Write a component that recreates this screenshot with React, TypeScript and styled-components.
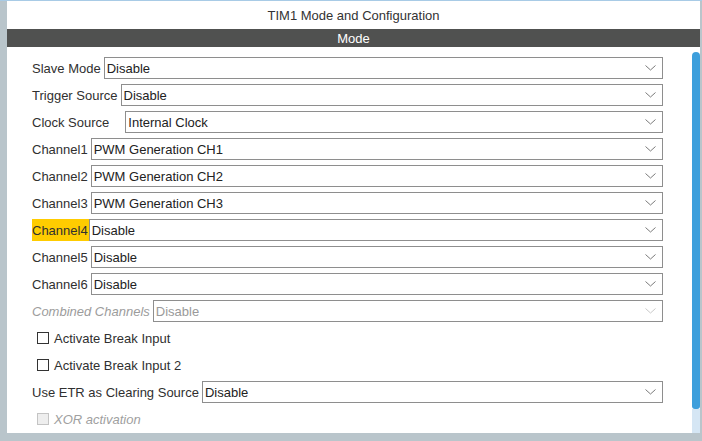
import * as React from 'react';
import styled, { createGlobalStyle } from 'styled-components';

const GlobalStyle = createGlobalStyle`
    html, body {
        margin: 0;
        padding: 0;
        background: #b9c5cb;
    }
    body {
        font-family: 'Liberation Sans', Arial, sans-serif;
        font-size: 13px;
        color: #2b2b2b;
    }
`;

const Frame = styled.div`
    width: 702px;
    height: 441px;
    box-sizing: border-box;
    padding: 0 2px 8px 7px;
    display: flex;
    flex-direction: column;
    background: #b9c5cb;
    border-top: 1px solid #a8cbe6;
`;

const Panel = styled.div`
    flex: 1;
    display: flex;
    flex-direction: column;
    background: #ffffff;
    min-height: 0;
`;

const Title = styled.div`
    height: 28px;
    display: flex;
    align-items: center;
    justify-content: center;
    color: #333333;
`;

const SectionBar = styled.div`
    height: 18px;
    display: flex;
    align-items: center;
    justify-content: center;
    background: #505150;
    color: #ffffff;
`;

const Body = styled.div`
    flex: 1;
    display: flex;
    min-height: 0;
`;

const Form = styled.div`
    flex: 1;
    display: flex;
    flex-direction: column;
    gap: 5px;
    padding: 10px 29px 0 25px;
`;

const Row = styled.div`
    height: 22px;
    display: flex;
    align-items: center;
`;

interface LabelProps {
    $highlight?: boolean;
    $disabled?: boolean;
    $gap?: number;
}

const Label = styled.span<LabelProps>`
    white-space: nowrap;
    height: 22px;
    box-sizing: border-box;
    padding-top: 1px;
    line-height: 21px;
    margin-right: ${(props) => (props.$gap !== undefined ? props.$gap : 3)}px;
    background: ${(props) => (props.$highlight ? '#ffcc00' : 'transparent')};
    color: ${(props) => (props.$disabled ? '#9c9c9c' : '#303030')};
    font-style: ${(props) => (props.$disabled ? 'italic' : 'normal')};
    padding-right: ${(props) => (props.$highlight ? 1 : 0)}px;
`;

const Select = styled.div<{ $disabled?: boolean }>`
    flex: 1;
    height: 22px;
    box-sizing: border-box;
    border: 1px solid #8e8e8e;
    display: flex;
    align-items: center;
    padding: 0 6px 0 2px;
    color: ${(props) => (props.$disabled ? '#9a9a9a' : '#222222')};
    background: #ffffff;
`;

const SelectText = styled.span`
    flex: 1;
    white-space: nowrap;
`;

const CheckRow = styled.label<{ $disabled?: boolean }>`
    height: 22px;
    display: flex;
    align-items: center;
    padding-left: 5px;
    color: ${(props) => (props.$disabled ? '#a0a0a0' : '#303030')};
    font-style: ${(props) => (props.$disabled ? 'italic' : 'normal')};
`;

const Box = styled.span<{ $disabled?: boolean }>`
    width: 12px;
    height: 12px;
    box-sizing: border-box;
    border: 1px solid ${(props) => (props.$disabled ? '#c4c4c4' : '#333333')};
    background: ${(props) => (props.$disabled ? '#eeeeee' : '#ffffff')};
    margin-right: 5px;
`;

const ScrollTrack = styled.div`
    width: 8px;
    display: flex;
    flex-direction: column;
    padding-top: 5px;
`;

const Thumb = styled.div`
    height: 357px;
    background: #3d9fdc;
    border-radius: 4px 4px 3px 3px;
`;

const TrackRest = styled.div`
    flex: 1;
    background: #d5e6f4;
`;

const Chevron = ({ disabled }: { disabled?: boolean }) => (
    <svg width="11" height="6" viewBox="0 0 11 6">
        <path d="M0.5 0.5 L5.5 5 L10.5 0.5" fill="none" stroke={disabled ? '#c9c9c9' : '#7a7a7a'} strokeWidth="1" />
    </svg>
);

interface FieldProps {
    label: string;
    value: string;
    gap?: number;
    highlight?: boolean;
    disabled?: boolean;
}

const Field = (props: FieldProps) => (
    <Row>
        <Label $gap={props.gap} $highlight={props.highlight} $disabled={props.disabled}>
            {props.label}
        </Label>
        <Select $disabled={props.disabled}>
            <SelectText>{props.value}</SelectText>
            <Chevron disabled={props.disabled} />
        </Select>
    </Row>
);

const Check = ({ label, disabled }: { label: string; disabled?: boolean }) => (
    <CheckRow $disabled={disabled}>
        <Box $disabled={disabled} />
        {label}
    </CheckRow>
);

export default function App() {
    return (
        <>
            <GlobalStyle />
            <Frame>
                <Panel>
                    <Title>TIM1 Mode and Configuration</Title>
                    <SectionBar>Mode</SectionBar>
                    <Body>
                        <Form>
                            <Field label="Slave Mode" value="Disable" />
                            <Field label="Trigger Source" value="Disable" />
                            <Field label="Clock Source" value="Internal Clock" gap={16} />
                            <Field label="Channel1" value="PWM Generation CH1" />
                            <Field label="Channel2" value="PWM Generation CH2" />
                            <Field label="Channel3" value="PWM Generation CH3" />
                            <Field label="Channel4" value="Disable" highlight gap={0} />
                            <Field label="Channel5" value="Disable" />
                            <Field label="Channel6" value="Disable" />
                            <Field label="Combined Channels" value="Disable" disabled />
                            <Check label="Activate Break Input" />
                            <Check label="Activate Break Input 2" />
                            <Field label="Use ETR as Clearing Source" value="Disable" />
                            <Check label="XOR activation" disabled />
                        </Form>
                        <ScrollTrack>
                            <Thumb />
                            <TrackRest />
                        </ScrollTrack>
                    </Body>
                </Panel>
            </Frame>
        </>
    );
}
